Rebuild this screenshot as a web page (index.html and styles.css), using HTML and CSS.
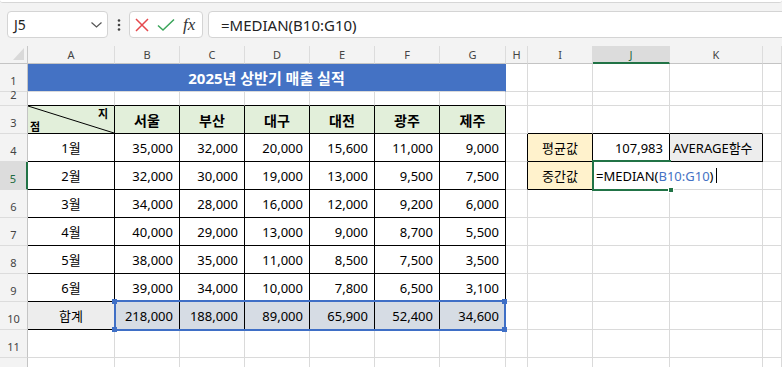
FILE: index.html
```html
<!DOCTYPE html>
<html lang="ko">
<head>
  <meta charset="UTF-8" />
  <meta name="viewport" content="width=device-width, initial-scale=1" />
  <title>2025년 상반기 매출 실적</title>
  <link rel="stylesheet" href="styles.css">
</head>
<body>
  <div class="ribbon-edge"></div>

  <div class="formula-bar">
    <div class="name-box">
      <span>J5</span>
      <svg class="chevron" width="11" height="6" viewBox="0 0 11 6"><polyline points="0.5,0.5 5.5,5 10.5,0.5" /></svg>
    </div>
    <div class="more">
      <svg width="4" height="12" viewBox="0 0 4 12"><circle cx="2" cy="1.5" r="1.3" /><circle cx="2" cy="6" r="1.3" /><circle cx="2" cy="10.5" r="1.3" /></svg>
    </div>
    <div class="fx-box">
      <svg class="cancel" width="16" height="16" viewBox="0 0 16 16"><path d="M2 2 L14 14 M14 2 L2 14" /></svg>
      <svg class="enter" width="18" height="16" viewBox="0 0 18 16"><path d="M1 8.5 L6 13 L17 2.5" /></svg>
      <span class="fx">fx</span>
    </div>
    <div class="formula-input">=MEDIAN(B10:G10)</div>
  </div>

  <section class="sheet" id="sheet"></section>

  <script>
    const sheet = document.getElementById('sheet');
    const cols = ['A', 'B', 'C', 'D', 'E', 'F', 'G', 'H', 'I', 'J', 'K', ''];
    const cities = ['서울', '부산', '대구', '대전', '광주', '제주'];
    const months = [
      ['1월', [35000, 32000, 20000, 15600, 11000, 9000]],
      ['2월', [32000, 30000, 19000, 13000, 9500, 7500]],
      ['3월', [34000, 28000, 16000, 12000, 9200, 6000]],
      ['4월', [40000, 29000, 13000, 9000, 8700, 5500]],
      ['5월', [38000, 35000, 11000, 8500, 7500, 3500]],
      ['6월', [39000, 34000, 10000, 7800, 6500, 3100]]
    ];

    const fmt = n => n.toLocaleString('en-US');
    const totals = cities.map((_, c) => months.reduce((sum, [, vals]) => sum + vals[c], 0));
    const average = Math.round(totals.reduce((a, b) => a + b, 0) / totals.length);

    function cell(cls, html) {
      const div = document.createElement('div');
      div.className = ('cell ' + (cls || '')).trim();
      if (html !== undefined) div.innerHTML = html;
      sheet.appendChild(div);
      return div;
    }

    function blanks(count, cls) {
      for (let i = 0; i < count; i++) cell(cls);
    }

    function rowHead(n, active) {
      cell('row-head' + (active ? ' active' : ''), n);
    }

    // column headers
    cell('corner');
    cols.forEach(c => cell('col-head' + (c === 'J' ? ' active' : ''), c));

    // title + spacer rows
    rowHead(1);
    cell('title', '2025년 상반기 매출 실적');
    blanks(5);

    rowHead(2);
    blanks(7, 'bb');
    blanks(5);

    rowHead(3);
    cell('tb diag', '<svg class="slash" preserveAspectRatio="none" viewBox="0 0 100 100"><line x1="0" y1="0" x2="100" y2="100" /></svg><span class="top">지</span><span class="bottom">점</span>');
    cities.forEach(c => cell('tb th', c));
    cell();
    blanks(3, 'bb');
    cell();

    months.forEach(([label, vals], i) => {
      rowHead(i + 4, i === 1);
      cell('tb center', label);
      vals.forEach(v => cell('tb num', fmt(v)));

      if (i === 0) {
        cell('br');
        cell('tb label', '평균값');
        cell('tb num', fmt(average));
        cell('tb func', 'AVERAGE함수');
        cell();
      } else if (i === 1) {
        cell('br');
        cell('tb label', '중간값');
        cell('edit', '<span class="edit-box">=MEDIAN(<span class="ref">B10:G10</span>)<span class="caret"></span></span>');
        cell();
        cell();
      } else {
        blanks(5);
      }
    });

    rowHead(10);
    cell('tb total', '합계');
    totals.forEach(t => cell('tb num sel', fmt(t)));
    blanks(5);

    rowHead(11);
    blanks(12);
    // row 12 only peeks in at the bottom edge
    rowHead('');
    blanks(12);

    // formula reference + active cell outlines
    const range = document.createElement('div');
    range.className = 'range';
    range.innerHTML = '<i class="tl"></i><i class="tr"></i><i class="bl"></i><i class="br"></i>';
    sheet.appendChild(range);

    const active = document.createElement('div');
    active.className = 'active-cell';
    active.innerHTML = '<i></i>';
    sheet.appendChild(active);
  </script>
</body>
</html>
```

FILE: styles.css
```css
*, *::before, *::after { box-sizing: border-box; }

body {
  margin: 0;
  width: 782px;
  height: 367px;
  overflow: hidden;
  background-color: #f3f3f3;
  font-family: "Noto Sans", "Noto Sans CJK KR", sans-serif;
  color: #000;
}

.ribbon-edge {
  height: 3px;
  background-color: #fff;
  border-bottom: 1px solid #d6d6d6;
  border-radius: 0 0 6px 6px;
}

/* formula bar */
.formula-bar {
  display: flex;
  height: 27px;
  margin-top: 8px;
  padding-left: 7px;
}

.name-box {
  width: 101px;
  display: flex;
  align-items: center;
  justify-content: space-between;
  padding: 0 5px 0 6px;
  background-color: #fff;
  border: 1px solid #d4d4d4;
  border-radius: 4px;
  font-size: 14px;
  color: #222;
}

.chevron polyline {
  fill: none;
  stroke: #555;
  stroke-width: 1.2;
}

.more {
  width: 21px;
  display: flex;
  align-items: center;
  justify-content: center;
}

.more svg { fill: #444; }

.fx-box {
  width: 74px;
  display: flex;
  align-items: center;
  padding-left: 4px;
  background-color: #fff;
  border: 1px solid #d4d4d4;
  border-radius: 4px;
}

.cancel path {
  fill: none;
  stroke: #e5484d;
  stroke-width: 1.5;
}

.enter {
  margin-left: 7px;
}

.enter path {
  fill: none;
  stroke: #3aa55a;
  stroke-width: 1.5;
}

.fx {
  margin-left: 8px;
  font-family: "Liberation Serif", serif;
  font-style: italic;
  font-size: 17px;
  color: #333;
}

.formula-input {
  flex: 1;
  margin-left: 5px;
  margin-right: -10px;
  display: flex;
  align-items: center;
  padding-left: 12px;
  background-color: #fff;
  border: 1px solid #d4d4d4;
  border-radius: 4px;
  font-size: 15px;
  color: #222;
}

/* worksheet grid */
.sheet {
  position: relative;
  display: grid;
  grid-template-columns: 28px 87px 65px 65px 65px 65px 65px 66px 22px 65px 77px 93px 1fr;
  grid-template-rows: 18px 28px 14px 28px repeat(9, 28px);
  margin-top: 8px;
  background-color: #fff;
}

.cell {
  position: relative;
  display: flex;
  align-items: center;
  min-width: 0;
  padding: 0 3px;
  border-right: 1px solid #dadada;
  border-bottom: 1px solid #dadada;
  font-size: 13px;
  white-space: nowrap;
}

.corner,
.col-head,
.row-head {
  background-color: #f3f3f3;
  font-size: 11px;
  color: #444;
}

.corner {
  border-right-color: #c8c8c8;
  border-bottom-color: #c4c4c4;
}

.corner::after {
  content: "";
  position: absolute;
  right: 3px;
  bottom: 3px;
  width: 11px;
  height: 12px;
  background-color: #d9d9d9;
  clip-path: polygon(100% 0, 100% 100%, 0 100%);
}

.col-head {
  justify-content: center;
  border-right-color: #dcdcdc;
  border-bottom-color: #c4c4c4;
}

.col-head.active {
  background-color: #dcdcdc;
  border-bottom: 2px solid #217346;
  color: #1d6b40;
}

.row-head {
  justify-content: center;
  align-items: flex-end;
  padding-bottom: 3px;
  border-right-color: #c4c4c4;
  border-bottom-color: #dcdcdc;
}

.row-head.active {
  background-color: #dcdcdc;
  border-right: 2px solid #217346;
  color: #1d6b40;
}

.title {
  grid-column: span 7;
  justify-content: center;
  background-color: #4472c4;
  border-right-color: #4472c4;
  color: #fff;
  font-size: 15px;
  font-weight: 700;
}

.bb { border-bottom-color: #000; }
.br { border-right-color: #000; }

.tb {
  border-right-color: #000;
  border-bottom-color: #000;
}

.th {
  justify-content: center;
  background-color: #e2efda;
  font-size: 14px;
  font-weight: 700;
}

.diag {
  flex-direction: column;
  align-items: stretch;
  justify-content: space-between;
  padding: 1px 6px 0 2px;
  background-color: #e2efda;
  font-size: 11px;
  font-weight: 700;
  line-height: 13px;
}

.diag .slash {
  position: absolute;
  inset: 0;
  width: 100%;
  height: 100%;
}

.diag .slash line {
  stroke: #000;
  stroke-width: 1;
  vector-effect: non-scaling-stroke;
}

.diag .top { text-align: right; }
.diag .bottom { text-align: left; }

.center { justify-content: center; }

.num {
  justify-content: flex-end;
  padding-right: 6px;
}

.label {
  justify-content: center;
  background-color: #fff2cc;
}

.func {
  background-color: #ededed;
}

.total {
  justify-content: center;
  background-color: #ededed;
}

.sel {
  background-color: #d6dce4;
}

/* in-cell editor grows over the next column */
.edit {
  align-items: stretch;
  overflow: visible;
}

.edit-box {
  display: flex;
  align-items: center;
  padding-right: 2px;
  background-color: #fff;
}

.edit .ref { color: #4472c4; }

.caret {
  flex: none;
  width: 1px;
  height: 15px;
  margin-left: 2px;
  background-color: #000;
}

/* outlines drawn over the grid */
.range {
  position: absolute;
  grid-row: 11 / 12;
  grid-column: 3 / 9;
  left: -1px;
  top: -2px;
  right: 0;
  bottom: -1px;
  border: 2px solid #3f6fc6;
}

.range i {
  position: absolute;
  width: 5px;
  height: 5px;
  background-color: #3f6fc6;
}

.range .tl { left: -4px; top: -3px; }
.range .tr { right: -3px; top: -3px; }
.range .bl { left: -4px; bottom: -3px; }
.range .br { right: -3px; bottom: -3px; }

.active-cell {
  position: absolute;
  grid-row: 6 / 7;
  grid-column: 11 / 12;
  left: -1px;
  top: -2px;
  right: -1px;
  bottom: -1px;
  border: 2px solid #217346;
  border-right: 0;
}

.active-cell i {
  position: absolute;
  right: -3px;
  bottom: -4px;
  width: 6px;
  height: 6px;
  background-color: #217346;
  border: 1px solid #fff;
}
```
